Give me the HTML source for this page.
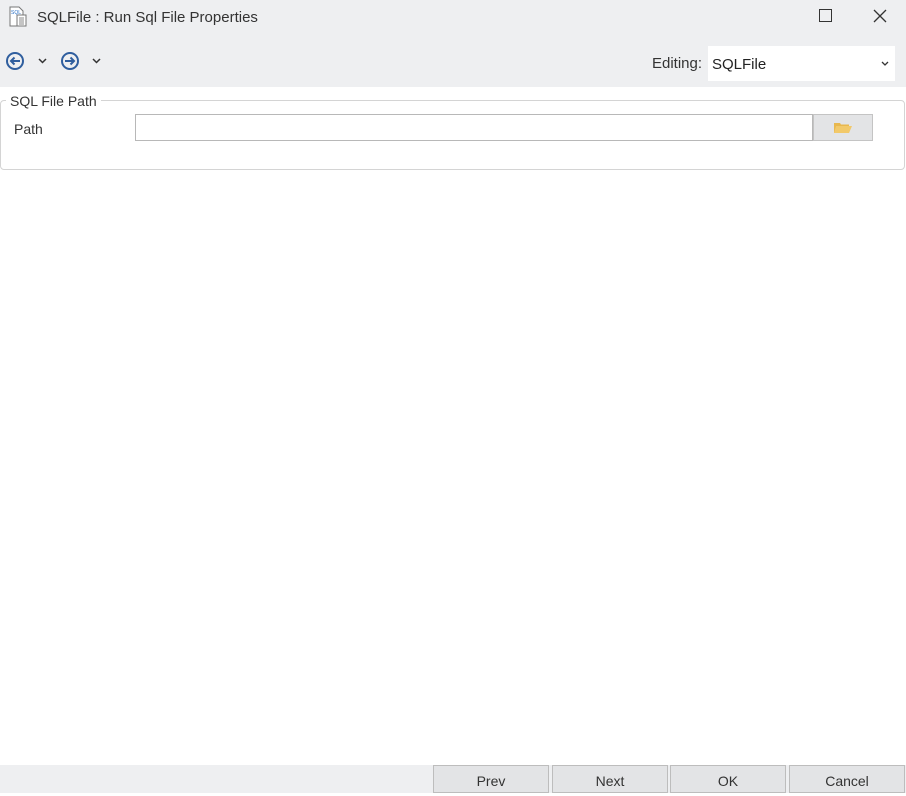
<!DOCTYPE html>
<html><head><style>
body{margin:0;width:906px;height:793px;background:#fff;font-family:"Liberation Sans",sans-serif;font-size:14px;color:#222;position:relative;overflow:hidden}
.abs{position:absolute}
.btn{position:absolute;top:765px;height:28px;width:116px;background:#e3e4e6;border:1px solid #bdbdbd;box-sizing:border-box;text-align:center;line-height:30px;font-size:14px;color:#333}
</style></head><body>
<div class="abs" style="left:0;top:0;width:906px;height:87px;background:#eeeff1"></div>
<svg class="abs" style="left:8px;top:6px" width="20" height="22" viewBox="0 0 20 22"><path d="M2 1h9l4 4v15H2z" fill="#fff" stroke="#777"/><rect x="9" y="9" width="9" height="11" fill="#fff" stroke="#777"/><path d="M11 12h5M11 14h5M11 16h5M11 18h5" stroke="#888"/><text x="3" y="8" font-size="5" fill="#2a6fc4">SQL</text></svg>
<div class="abs" style="left:37px;top:9px;font-size:15px;color:#333">SQLFile : Run Sql File Properties</div>
<div class="abs" style="left:819px;top:9px;width:11px;height:11px;border:1px solid #333"></div>
<svg class="abs" style="left:873px;top:9px" width="14" height="14"><path d="M1 1L13 13M13 1L1 13" stroke="#333" stroke-width="1.3"/></svg>
<svg class="abs" style="left:5px;top:51px" width="100" height="20"><circle cx="10" cy="10" r="8" fill="none" stroke="#2f5e9e" stroke-width="2"/><path d="M15 10H6M9.5 6.5L6 10l3.5 3.5" fill="none" stroke="#2f5e9e" stroke-width="2"/><path d="M34 8l3.5 3.5L41 8" fill="none" stroke="#333" stroke-width="1.5"/><circle cx="65" cy="10" r="8" fill="none" stroke="#2f5e9e" stroke-width="2"/><path d="M60 10h9M65.5 6.5L69 10l-3.5 3.5" fill="none" stroke="#2f5e9e" stroke-width="2"/><path d="M88 8l3.5 3.5L95 8" fill="none" stroke="#333" stroke-width="1.5"/></svg>
<div class="abs" style="left:652px;top:55px;font-size:15px;color:#333">Editing:</div>
<div class="abs" style="left:708px;top:46px;width:187px;height:35px;background:#fff"></div>
<div class="abs" style="left:712px;top:56px;font-size:15px;color:#222">SQLFile</div>
<svg class="abs" style="left:881px;top:61px" width="8" height="6"><path d="M1 1l3 3 3-3" fill="none" stroke="#333" stroke-width="1.3"/></svg>
<div class="abs" style="left:0;top:100px;width:905px;height:70px;border:1px solid #d4d4d4;border-radius:4px;box-sizing:border-box"></div>
<div class="abs" style="left:6px;top:93px;background:#fff;padding:0 4px;font-size:14px;color:#333">SQL File Path</div>
<div class="abs" style="left:14px;top:121px;color:#333">Path</div>
<div class="abs" style="left:135px;top:114px;width:678px;height:27px;border:1px solid #b8b8b8;box-sizing:border-box"></div>
<div class="abs" style="left:813px;top:114px;width:60px;height:27px;border:1px solid #c4c4c4;background:#e3e4e6;box-sizing:border-box"></div>
<svg class="abs" style="left:833px;top:120px" width="20" height="14"><path d="M1 3h6l1 1.5h8V13H1z" fill="#e8b84f"/><path d="M3 6h16l-3 7H1z" fill="#f2c96a"/></svg>
<div class="abs" style="left:0;top:765px;width:906px;height:28px;background:#eeeff1"></div>
<div class="btn" style="left:433px">Prev</div>
<div class="btn" style="left:552px">Next</div>
<div class="btn" style="left:670px">OK</div>
<div class="btn" style="left:789px">Cancel</div>
</body></html>
